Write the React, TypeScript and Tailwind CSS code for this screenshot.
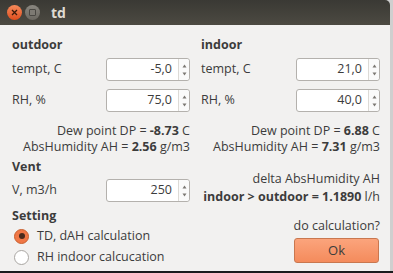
import React from 'react';

const font = { fontFamily: '"Open Sans", "DejaVu Sans", sans-serif' };

function SpinBox({ value }: { value: string }) {
  return (
    <div className="flex h-[23px] w-[84px] rounded-[3px] border border-[#b4b1ad] bg-white">
      <div className="flex flex-1 items-center justify-end pr-[6px] text-[12.5px] text-[#3c3c3c]">{value}</div>
      <div className="flex w-[11px] flex-col items-center justify-center rounded-r-[3px] border-l border-[#dcdad6] bg-[#fafafa] text-[#7a7772]">
        <svg width="5" height="4" viewBox="0 0 5 4" className="mb-[4px]">
          <path d="M2.5 0.5 L4.5 3.5 L0.5 3.5 Z" fill="currentColor" />
        </svg>
        <svg width="5" height="4" viewBox="0 0 5 4">
          <path d="M0.5 0.5 L4.5 0.5 L2.5 3.5 Z" fill="currentColor" />
        </svg>
      </div>
    </div>
  );
}

function Row({ label, value, className = '' }: { label: string; value: string; className?: string }) {
  return (
    <div className={`flex h-[23px] items-center justify-between ${className}`}>
      <span className="text-[12.5px] text-[#3c3c3c]">{label}</span>
      <SpinBox value={value} />
    </div>
  );
}

function Radio({ checked, label }: { checked?: boolean; label: string }) {
  return (
    <div className="flex h-[20px] items-center gap-[8px] pl-[2px]">
      {checked ? (
        <span className="flex h-[15px] w-[15px] items-center justify-center rounded-full border border-[#c9602f] bg-[#f07746]">
          <span className="h-[6px] w-[6px] rounded-full bg-[#4a2a1c]" />
        </span>
      ) : (
        <span className="h-[15px] w-[15px] rounded-full border border-[#a9a6a2] bg-white" />
      )}
      <span className="text-[12.5px] text-[#3c3c3c]">{label}</span>
    </div>
  );
}

const txt = 'whitespace-nowrap text-right text-[12.5px] leading-[16px] text-[#3c3c3c]';
const head = 'h-[16px] whitespace-nowrap text-[12.5px] font-bold leading-[16px] text-[#3c3c3c]';

export default function App() {
  return (
    <div className="h-[273px] w-[393px] overflow-hidden bg-[#1b1b1d]" style={font}>
      <div className="flex h-[271px] w-[393px] bg-[#cfcfcf]">
        <div className="flex w-[390px] flex-col">
          <div className="flex h-[25px] items-center rounded-tr-[5px] bg-gradient-to-b from-[#3a3934] to-[#4c4a42] pl-[7px]">
            <span className="flex h-[15px] w-[15px] items-center justify-center rounded-full bg-gradient-to-b from-[#f58a5a] to-[#de4c1a]">
              <svg width="7" height="7" viewBox="0 0 7 7">
                <path d="M1 1 L6 6 M6 1 L1 6" stroke="#3a1a0a" strokeWidth="1.3" />
              </svg>
            </span>
            <span className="ml-[3px] flex h-[15px] w-[15px] items-center justify-center rounded-full bg-gradient-to-b from-[#8a8780] to-[#6b6861]">
              <span className="h-[7px] w-[7px] rounded-[1px] border border-[#4a4843] bg-[#7d7a73]" />
            </span>
            <span className="ml-[11px] text-[14px] font-bold text-[#dfdbd2]">td</span>
          </div>
          <div className="grid flex-1 grid-cols-[178px_179px] gap-x-[11px] bg-[#f2f1f0] pl-[12px] pt-[12px]">
            <div className="flex flex-col">
              <div className={head}>outdoor</div>
              <Row label="tempt, C" value="-5,0" className="mt-[5px]" />
              <Row label="RH, %" value="75,0" className="mt-[8px]" />
              <div className={`mt-[11px] ${txt}`}>
                Dew point DP = <b>-8.73</b> C
              </div>
              <div className={txt}>
                AbsHumidity AH = <b>2.56</b> g/m3
              </div>
              <div className={`mt-[4px] ${head}`}>Vent</div>
              <Row label="V, m3/h" value="250" className="mt-[4px]" />
              <div className={`mt-[6px] ${head}`}>Setting</div>
              <div className="mt-[2px]">
                <Radio checked label="TD, dAH calculation" />
              </div>
              <div className="mt-[1px]">
                <Radio label="RH indoor calcucation" />
              </div>
            </div>
            <div className="flex flex-col">
              <div className={head}>indoor</div>
              <Row label="tempt, C" value="21,0" className="mt-[5px]" />
              <Row label="RH, %" value="40,0" className="mt-[8px]" />
              <div className={`mt-[11px] ${txt}`}>
                Dew point DP = <b>6.88</b> C
              </div>
              <div className={txt}>
                AbsHumidity AH = <b>7.31</b> g/m3
              </div>
              <div className={`mt-[16px] ${txt}`}>delta AbsHumidity AH</div>
              <div className={`mt-[2px] ${txt}`}>
                <b>indoor &gt; outdoor = 1.1890</b> l/h
              </div>
              <div className={`mt-[13px] ${txt}`}>do calculation?</div>
              <div className="mt-[4px] flex justify-end pr-[1px]">
                <button
                  type="button"
                  className="h-[25px] w-[85px] rounded-[3px] border border-[#c9774f] bg-gradient-to-b from-[#fba47c] to-[#f48b5c] text-[13px] text-[#3c3c3c]"
                >
                  Ok
                </button>
              </div>
            </div>
          </div>
        </div>
      </div>
    </div>
  );
}
